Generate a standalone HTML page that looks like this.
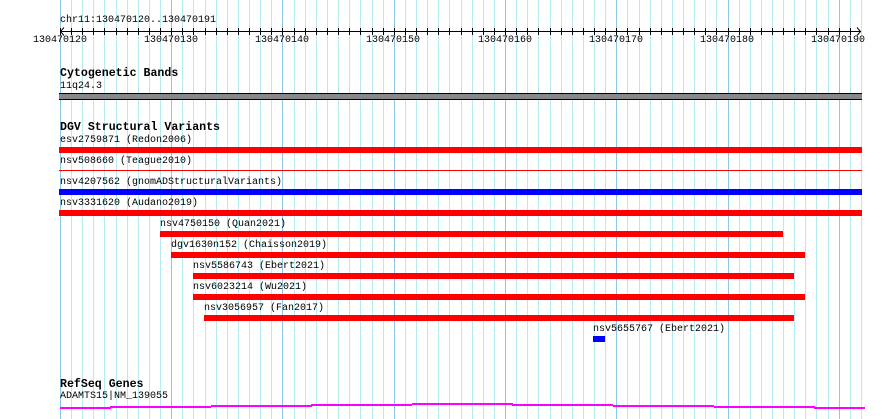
<!DOCTYPE html>
<html><head><meta charset="utf-8"><style>
body{margin:0;width:890px;height:419px;background:#fff;position:relative;overflow:hidden;font-family:"Liberation Mono","DejaVu Sans Mono",monospace;}
.t{position:absolute;font-size:10px;line-height:11px;color:#000;white-space:nowrap;}
.b{position:absolute;font-size:11.6px;font-weight:bold;line-height:12px;color:#000;white-space:nowrap;}
.r{position:absolute;background:#f00;height:6px;}
.bl{position:absolute;background:#00f;height:6px;}
.ax{position:absolute;left:60px;top:31px;width:800px;height:1px;background:#000;}
.m{position:absolute;background:#f0f;height:2px;}
</style></head><body>
<svg style="position:absolute;left:0;top:0" width="890" height="419">
<path stroke="#b4ecf2" stroke-width="1" d="M71.5 0V419M82.5 0V419M93.5 0V419M104.5 0V419M116.5 0V419M127.5 0V419M138.5 0V419M149.5 0V419M160.5 0V419M182.5 0V419M193.5 0V419M205.5 0V419M216.5 0V419M227.5 0V419M238.5 0V419M249.5 0V419M260.5 0V419M271.5 0V419M294.5 0V419M305.5 0V419M316.5 0V419M327.5 0V419M338.5 0V419M349.5 0V419M360.5 0V419M372.5 0V419M383.5 0V419M405.5 0V419M416.5 0V419M427.5 0V419M438.5 0V419M449.5 0V419M461.5 0V419M472.5 0V419M483.5 0V419M494.5 0V419M516.5 0V419M527.5 0V419M538.5 0V419M550.5 0V419M561.5 0V419M572.5 0V419M583.5 0V419M594.5 0V419M605.5 0V419M627.5 0V419M639.5 0V419M650.5 0V419M661.5 0V419M672.5 0V419M683.5 0V419M694.5 0V419M705.5 0V419M716.5 0V419M739.5 0V419M750.5 0V419M761.5 0V419M772.5 0V419M783.5 0V419M794.5 0V419M805.5 0V419M816.5 0V419M828.5 0V419M850.5 0V419M861.5 0V419"/>
<path stroke="#8cc6e6" stroke-width="1" d="M60.5 0V419M171.5 0V419M282.5 0V419M394.5 0V419M505.5 0V419M616.5 0V419M728.5 0V419M839.5 0V419"/>
<path stroke="#000" stroke-width="1" d="M60.5 28V35M71.5 28V35M82.5 28V35M93.5 28V35M104.5 28V35M116.5 28V35M127.5 28V35M138.5 28V35M149.5 28V35M160.5 28V35M171.5 28V35M182.5 28V35M193.5 28V35M205.5 28V35M216.5 28V35M227.5 28V35M238.5 28V35M249.5 28V35M260.5 28V35M271.5 28V35M282.5 28V35M294.5 28V35M305.5 28V35M316.5 28V35M327.5 28V35M338.5 28V35M349.5 28V35M360.5 28V35M372.5 28V35M383.5 28V35M394.5 28V35M405.5 28V35M416.5 28V35M427.5 28V35M438.5 28V35M449.5 28V35M461.5 28V35M472.5 28V35M483.5 28V35M494.5 28V35M505.5 28V35M516.5 28V35M527.5 28V35M538.5 28V35M550.5 28V35M561.5 28V35M572.5 28V35M583.5 28V35M594.5 28V35M605.5 28V35M616.5 28V35M627.5 28V35M639.5 28V35M650.5 28V35M661.5 28V35M672.5 28V35M683.5 28V35M694.5 28V35M705.5 28V35M716.5 28V35M728.5 28V35M739.5 28V35M750.5 28V35M761.5 28V35M772.5 28V35M783.5 28V35M794.5 28V35M805.5 28V35M816.5 28V35M828.5 28V35M839.5 28V35M850.5 28V35"/>
<path d="M60 31.5H861" stroke="#000"/>
<polyline points="64,27.5 60.5,31.5 64,35.5" fill="none" stroke="#000"/><polyline points="857,27.5 860.5,31.5 857,35.5" fill="none" stroke="#000"/>
</svg>
<div class="t" style="left:60px;top:15px">chr11:130470120..130470191</div>
<div class="t" style="left:33px;top:35px">130470120</div>
<div class="t" style="left:144px;top:35px">130470130</div>
<div class="t" style="left:255px;top:35px">130470140</div>
<div class="t" style="left:366px;top:35px">130470150</div>
<div class="t" style="left:478px;top:35px">130470160</div>
<div class="t" style="left:589px;top:35px">130470170</div>
<div class="t" style="left:700px;top:35px">130470180</div>
<div class="t" style="left:811px;top:35px">130470190</div>
<div class="b" style="left:60px;top:68px">Cytogenetic Bands</div>
<div class="t" style="left:60px;top:81px">11q24.3</div>
<div style="position:absolute;left:59px;top:93px;width:803px;height:5px;background:#888;border-top:1px solid #000;border-bottom:1px solid #000"></div>
<div class="b" style="left:60px;top:122px">DGV Structural Variants</div>
<div class="t" style="left:60px;top:135px">esv2759871 (Redon2006)</div>
<div class="r" style="left:59px;top:147px;width:803px"></div>
<div class="t" style="left:60px;top:156px">nsv508660 (Teague2010)</div>
<div class="r" style="left:59px;top:170px;width:803px;height:1px"></div>
<div class="t" style="left:60px;top:177px">nsv4207562 (gnomADStructuralVariants)</div>
<div class="bl" style="left:59px;top:189px;width:803px"></div>
<div class="t" style="left:60px;top:198px">nsv3331620 (Audano2019)</div>
<div class="r" style="left:59px;top:210px;width:803px"></div>
<div class="t" style="left:160px;top:219px">nsv4750150 (Quan2021)</div>
<div class="r" style="left:160px;top:231px;width:623px"></div>
<div class="t" style="left:171px;top:240px">dgv1630n152 (Chaisson2019)</div>
<div class="r" style="left:171px;top:252px;width:634px"></div>
<div class="t" style="left:193px;top:261px">nsv5586743 (Ebert2021)</div>
<div class="r" style="left:193px;top:273px;width:601px"></div>
<div class="t" style="left:193px;top:282px">nsv6023214 (Wu2021)</div>
<div class="r" style="left:193px;top:294px;width:612px"></div>
<div class="t" style="left:204px;top:303px">nsv3056957 (Fan2017)</div>
<div class="r" style="left:204px;top:315px;width:590px"></div>
<div class="t" style="left:593px;top:324px">nsv5655767 (Ebert2021)</div>
<div class="bl" style="left:593px;top:336px;width:12px"></div>
<div class="b" style="left:60px;top:379px">RefSeq Genes</div>
<div class="t" style="left:60px;top:391px">ADAMTS15|NM_139055</div>
<div class="m" style="left:60px;top:407px;width:51px"></div>
<div class="m" style="left:110px;top:406px;width:101px"></div>
<div class="m" style="left:211px;top:405px;width:101px"></div>
<div class="m" style="left:311px;top:404px;width:101px"></div>
<div class="m" style="left:412px;top:403px;width:101px"></div>
<div class="m" style="left:512px;top:404px;width:101px"></div>
<div class="m" style="left:613px;top:405px;width:101px"></div>
<div class="m" style="left:714px;top:406px;width:101px"></div>
<div class="m" style="left:814px;top:407px;width:51px"></div>
</body></html>
